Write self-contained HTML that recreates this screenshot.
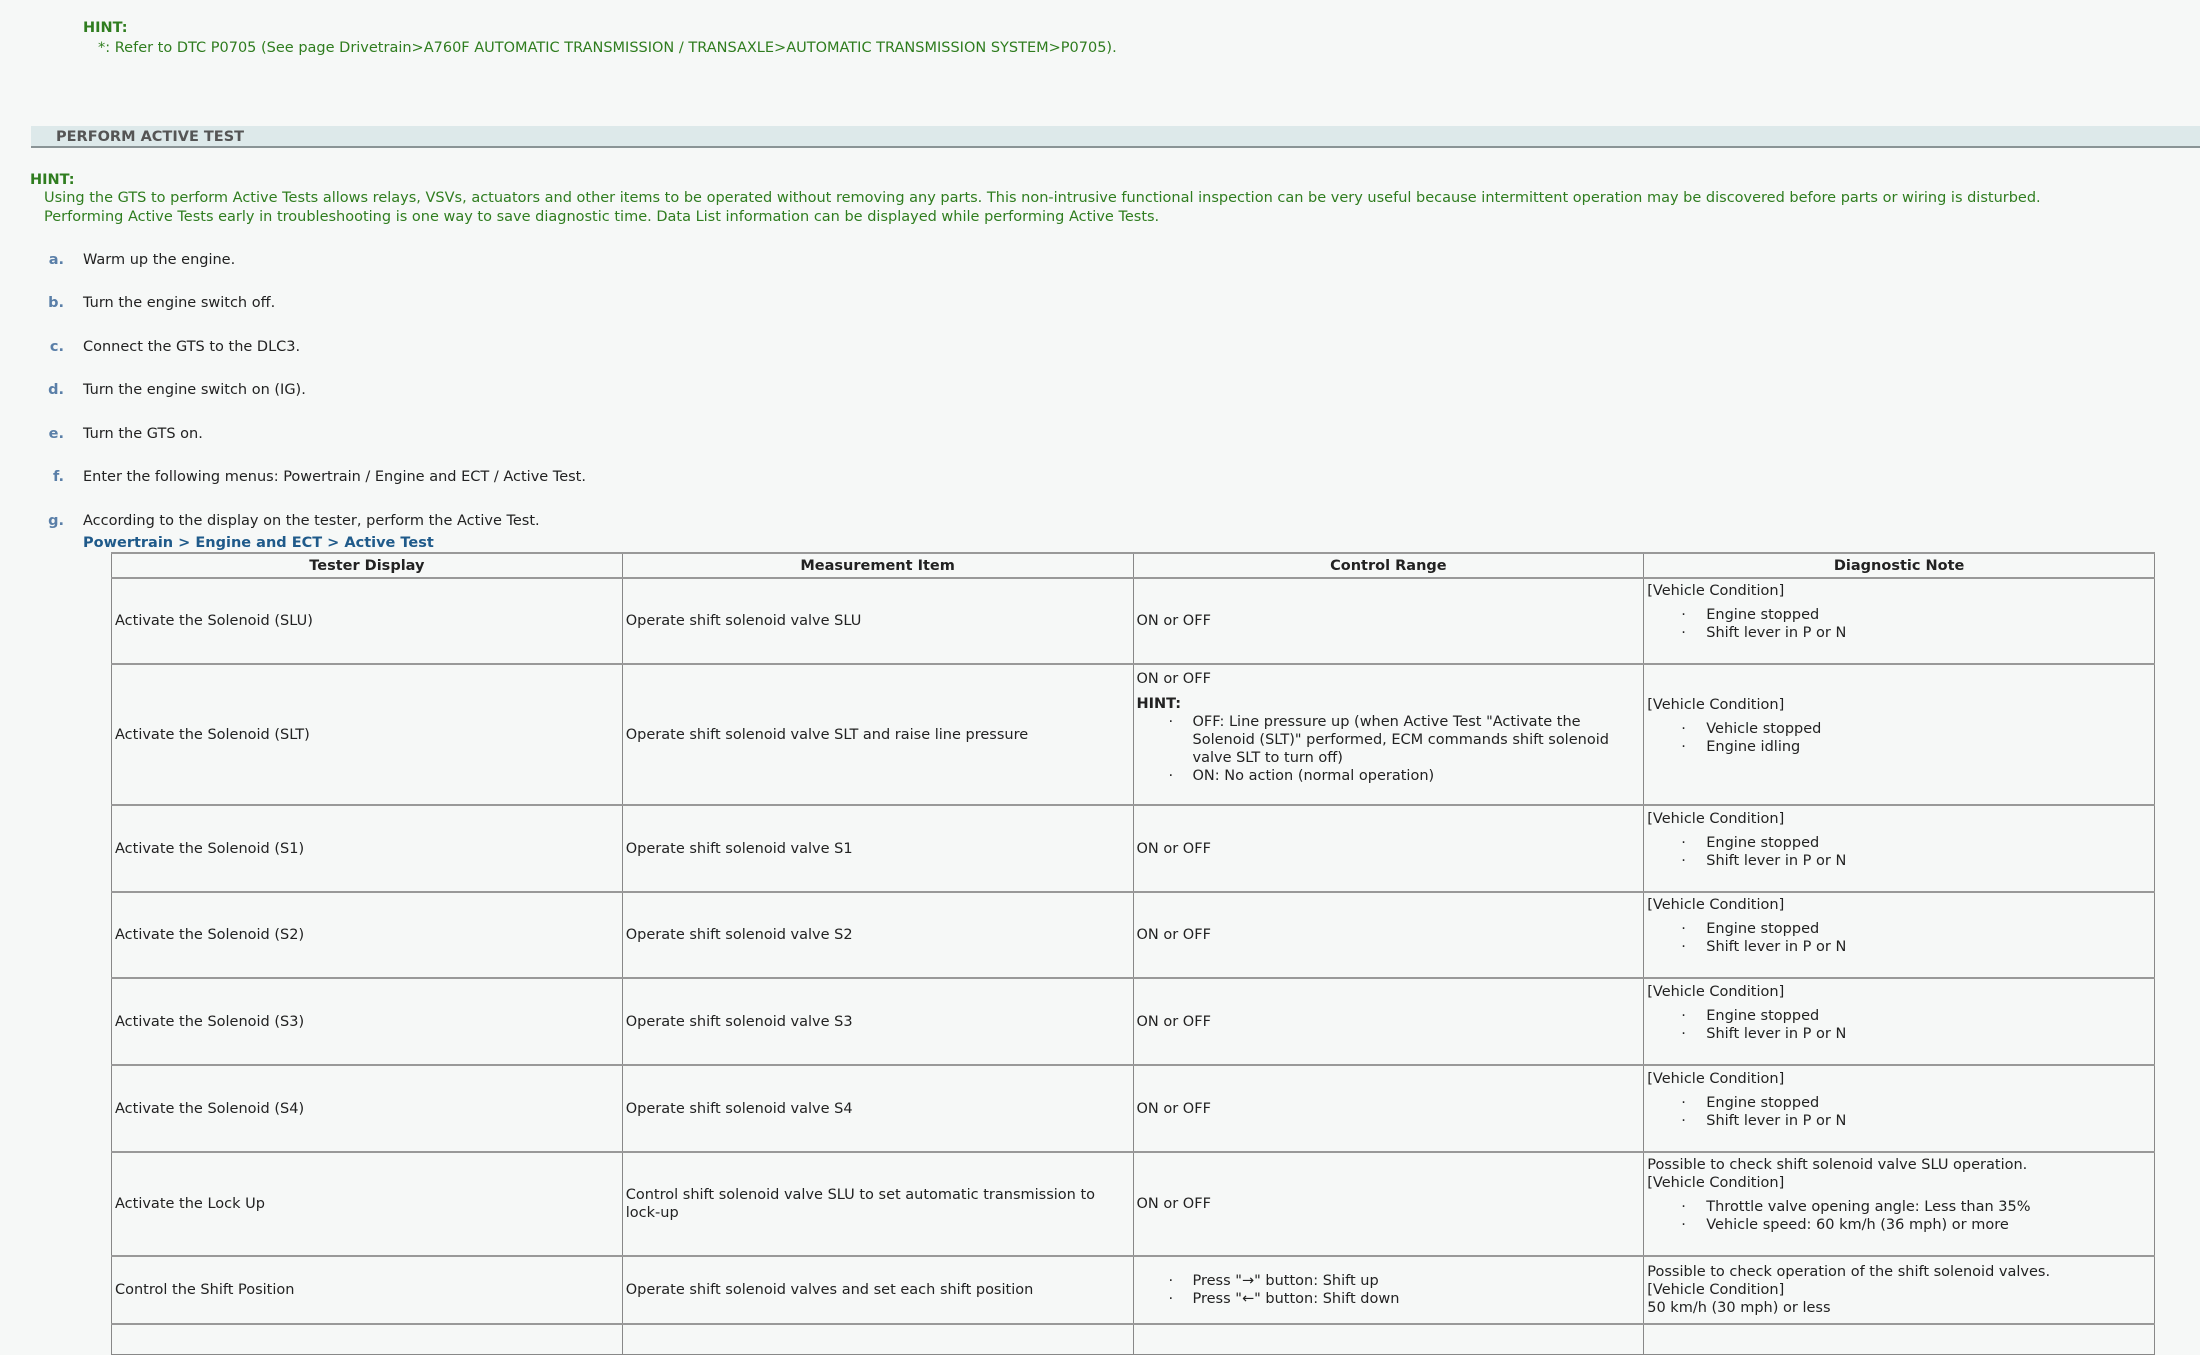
<!DOCTYPE html>
<html><head><meta charset="utf-8"><style>
*{box-sizing:border-box}
html,body{margin:0;padding:0;width:2200px;height:1330px;overflow:hidden;background:#f6f8f7;font-family:"DejaVu Sans",Verdana,sans-serif;font-size:14.5px;color:#222}
.abs{position:absolute;white-space:nowrap;line-height:18px}
.g{color:#2f7d1f}
.hb{font-weight:bold;color:#2f7d1f}
.bar{position:absolute;left:31px;top:126px;width:2169px;height:22px;background:#dde9ea;border-bottom:2px solid #8a9496;font-weight:bold;color:#555;padding-left:25px;line-height:22px}
.lt{position:absolute;left:44px;width:20px;text-align:right;color:#5a7fa8;font-weight:bold;line-height:18px}
.lx{position:absolute;left:83px;line-height:18px;white-space:nowrap}
table{position:absolute;left:111px;top:552px;width:2044px;border-collapse:collapse;table-layout:fixed}
td,th{border:1px solid #888;border-top:2px solid #999;padding:0 3px;vertical-align:middle;line-height:18px}
th{height:25px;font-weight:bold}
ul{list-style:none;margin:6px 0 18px 0;padding:0}
li{position:relative;padding-left:59px}
li:before{content:"·";position:absolute;left:34px}
.cr ul{margin:0;}
.cr li{padding-left:56px}
.cr li:before{left:32px}
</style></head><body>
<div class="abs hb" style="left:83px;top:19px">HINT:</div>
<div class="abs g" style="left:98px;top:39px">*: Refer to DTC P0705 (See page Drivetrain&gt;A760F AUTOMATIC TRANSMISSION / TRANSAXLE&gt;AUTOMATIC TRANSMISSION SYSTEM&gt;P0705).</div>
<div class="bar">PERFORM ACTIVE TEST</div>
<div class="abs hb" style="left:30px;top:171px">HINT:</div>
<div class="abs g" style="left:44px;top:189px">Using the GTS to perform Active Tests allows relays, VSVs, actuators and other items to be operated without removing any parts. This non-intrusive functional inspection can be very useful because intermittent operation may be discovered before parts or wiring is disturbed.</div>
<div class="abs g" style="left:44px;top:208px">Performing Active Tests early in troubleshooting is one way to save diagnostic time. Data List information can be displayed while performing Active Tests.</div>
<div class="lt" style="top:251px">a.</div><div class="lx" style="top:251px">Warm up the engine.</div>
<div class="lt" style="top:294px">b.</div><div class="lx" style="top:294px">Turn the engine switch off.</div>
<div class="lt" style="top:338px">c.</div><div class="lx" style="top:338px">Connect the GTS to the DLC3.</div>
<div class="lt" style="top:381px">d.</div><div class="lx" style="top:381px">Turn the engine switch on (IG).</div>
<div class="lt" style="top:425px">e.</div><div class="lx" style="top:425px">Turn the GTS on.</div>
<div class="lt" style="top:468px">f.</div><div class="lx" style="top:468px">Enter the following menus: Powertrain / Engine and ECT / Active Test.</div>
<div class="lt" style="top:512px">g.</div><div class="lx" style="top:512px">According to the display on the tester, perform the Active Test.</div>
<div class="lx" style="top:534px;font-weight:bold;color:#1f5a8a">Powertrain &gt; Engine and ECT &gt; Active Test</div>
<table>
<tr><th>Tester Display</th><th>Measurement Item</th><th>Control Range</th><th>Diagnostic Note</th></tr>
<tr style="height:86px"><td>Activate the Solenoid (SLU)</td><td>Operate shift solenoid valve SLU</td><td>ON or OFF</td><td>[Vehicle Condition]<ul><li>Engine stopped</li><li>Shift lever in P or N</li></ul></td></tr>
<tr style="height:141px"><td>Activate the Solenoid (SLT)</td><td>Operate shift solenoid valve SLT and raise line pressure</td><td class="cr">ON or OFF<div style="font-weight:bold;margin-top:7px">HINT:</div><ul><li>OFF: Line pressure up (when Active Test "Activate the Solenoid (SLT)" performed, ECM commands shift solenoid valve SLT to turn off)</li><li>ON: No action (normal operation)</li></ul><div style="height:14px"></div></td><td>[Vehicle Condition]<ul><li>Vehicle stopped</li><li>Engine idling</li></ul></td></tr>
<tr style="height:87px"><td>Activate the Solenoid (S1)</td><td>Operate shift solenoid valve S1</td><td>ON or OFF</td><td>[Vehicle Condition]<ul><li>Engine stopped</li><li>Shift lever in P or N</li></ul></td></tr>
<tr style="height:86px"><td>Activate the Solenoid (S2)</td><td>Operate shift solenoid valve S2</td><td>ON or OFF</td><td>[Vehicle Condition]<ul><li>Engine stopped</li><li>Shift lever in P or N</li></ul></td></tr>
<tr style="height:87px"><td>Activate the Solenoid (S3)</td><td>Operate shift solenoid valve S3</td><td>ON or OFF</td><td>[Vehicle Condition]<ul><li>Engine stopped</li><li>Shift lever in P or N</li></ul></td></tr>
<tr style="height:87px"><td>Activate the Solenoid (S4)</td><td>Operate shift solenoid valve S4</td><td>ON or OFF</td><td>[Vehicle Condition]<ul><li>Engine stopped</li><li>Shift lever in P or N</li></ul></td></tr>
<tr style="height:104px"><td>Activate the Lock Up</td><td>Control shift solenoid valve SLU to set automatic transmission to lock-up</td><td>ON or OFF</td><td>Possible to check shift solenoid valve SLU operation.<br>[Vehicle Condition]<ul><li>Throttle valve opening angle: Less than 35%</li><li>Vehicle speed: 60 km/h (36 mph) or more</li></ul></td></tr>
<tr style="height:68px"><td>Control the Shift Position</td><td>Operate shift solenoid valves and set each shift position</td><td class="cr"><ul><li>Press "→" button: Shift up</li><li>Press "←" button: Shift down</li></ul></td><td>Possible to check operation of the shift solenoid valves.<br>[Vehicle Condition]<br>50 km/h (30 mph) or less</td></tr>
<tr style="height:30px"><td>&nbsp;</td><td></td><td></td><td></td></tr>
</table>
</body></html>
